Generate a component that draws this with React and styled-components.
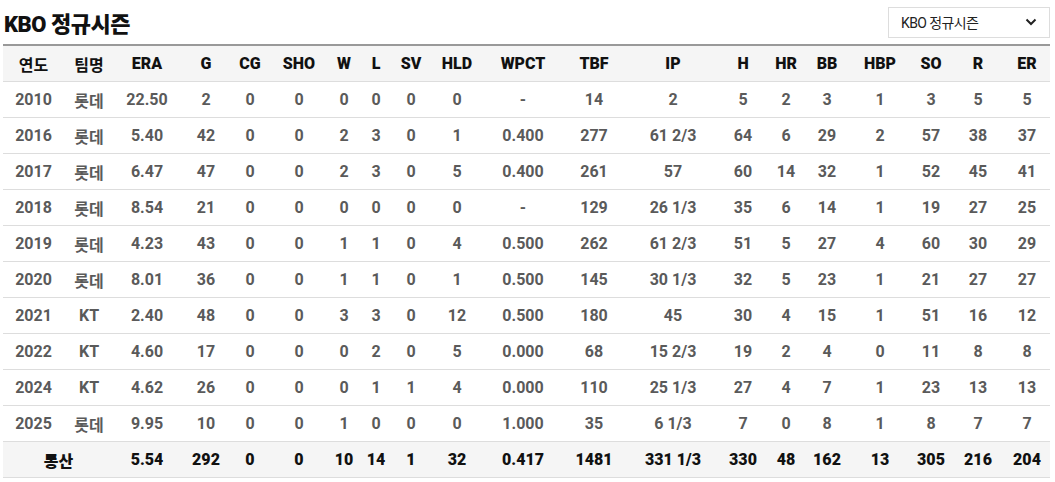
import React from "react";
import styled, { createGlobalStyle } from "styled-components";

const Global = createGlobalStyle`
  html, body { margin: 0; padding: 0; background: #fff; }
  body { font-family: Roboto, "Noto Sans CJK KR", sans-serif; }
`;

const Wrap = styled.div`
  width: 1055px;
  padding: 6px 5px 0 3px;
  box-sizing: border-box;
`;

const TopBar = styled.div`
  display: flex;
  align-items: center;
  justify-content: space-between;
  height: 32px;
  margin-bottom: 6px;
`;

const Title = styled.h2`
  margin: 0;
  padding-left: 1px;
  font-family: Roboto, "Noto Sans CJK KR", sans-serif;
  font-size: 22px;
  font-weight: 900;
  letter-spacing: -0.5px;
  color: #111;
`;

const Select = styled.div`
  width: 162px;
  height: 31px;
  box-sizing: border-box;
  border: 1px solid #ddd;
  display: flex;
  align-items: center;
  justify-content: space-between;
  padding: 0 12px 0 12px;
  font-family: Roboto, "Noto Sans CJK KR", sans-serif;
  font-size: 14px;
  color: #222;
  letter-spacing: -0.6px;
`;

const Table = styled.table`
  width: 1047px;
  border-collapse: collapse;
  table-layout: fixed;
  font-family: Roboto, "Noto Sans CJK KR", sans-serif;
  font-size: 16px;
  font-weight: 700;
  text-align: center;
`;

const HeadRow = styled.tr`
  background: #f5f5f5;
  border-top: 2px solid #999;
  border-bottom: 1px solid #ddd;
`;

const Th = styled.th`
  height: 35px;
  padding: 0;
  color: #111;
  font-family: ${(p) => (p.$ko ? '"Noto Sans CJK KR", sans-serif' : 'Roboto, "Noto Sans CJK KR", sans-serif')};
  font-weight: ${(p) => (p.$ko ? 700 : 900)};
  font-size: 16px;
`;

const Row = styled.tr`
  border-bottom: 1px solid #ddd;
  background: ${(p) => (p.$total ? "#f5f5f5" : "#fff")};
`;

const Td = styled.td`
  height: 35px;
  padding: 0;
  color: ${(p) => (p.$total ? "#111" : "#5a5a5a")};
  font-weight: ${(p) => (p.$total ? 900 : 700)};
  white-space: nowrap;
`;

const cols = [61, 50, 66, 52, 36, 62, 28, 36, 34, 58, 74, 68, 90, 50, 36, 46, 60, 42, 52, 46];
const heads = ["연도", "팀명", "ERA", "G", "CG", "SHO", "W", "L", "SV", "HLD", "WPCT", "TBF", "IP", "H", "HR", "BB", "HBP", "SO", "R", "ER"];

const rows = [
  ["2010", "롯데", "22.50", "2", "0", "0", "0", "0", "0", "0", "-", "14", "2", "5", "2", "3", "1", "3", "5", "5"],
  ["2016", "롯데", "5.40", "42", "0", "0", "2", "3", "0", "1", "0.400", "277", "61 2/3", "64", "6", "29", "2", "57", "38", "37"],
  ["2017", "롯데", "6.47", "47", "0", "0", "2", "3", "0", "5", "0.400", "261", "57", "60", "14", "32", "1", "52", "45", "41"],
  ["2018", "롯데", "8.54", "21", "0", "0", "0", "0", "0", "0", "-", "129", "26 1/3", "35", "6", "14", "1", "19", "27", "25"],
  ["2019", "롯데", "4.23", "43", "0", "0", "1", "1", "0", "4", "0.500", "262", "61 2/3", "51", "5", "27", "4", "60", "30", "29"],
  ["2020", "롯데", "8.01", "36", "0", "0", "1", "1", "0", "1", "0.500", "145", "30 1/3", "32", "5", "23", "1", "21", "27", "27"],
  ["2021", "KT", "2.40", "48", "0", "0", "3", "3", "0", "12", "0.500", "180", "45", "30", "4", "15", "1", "51", "16", "12"],
  ["2022", "KT", "4.60", "17", "0", "0", "0", "2", "0", "5", "0.000", "68", "15 2/3", "19", "2", "4", "0", "11", "8", "8"],
  ["2024", "KT", "4.62", "26", "0", "0", "0", "1", "1", "4", "0.000", "110", "25 1/3", "27", "4", "7", "1", "23", "13", "13"],
  ["2025", "롯데", "9.95", "10", "0", "0", "1", "0", "0", "0", "1.000", "35", "6 1/3", "7", "0", "8", "1", "8", "7", "7"],
];

const total = ["5.54", "292", "0", "0", "10", "14", "1", "32", "0.417", "1481", "331 1/3", "330", "48", "162", "13", "305", "216", "204"];

const Chevron = () => (
  <svg width="12" height="8" viewBox="0 0 12 8">
    <path d="M1.5 1.5 L6 6 L10.5 1.5" fill="none" stroke="#222" strokeWidth="2" />
  </svg>
);

export default function App() {
  return (
    <Wrap>
      <Global />
      <TopBar>
        <Title>KBO 정규시즌</Title>
        <Select>
          <span>KBO 정규시즌</span>
          <Chevron />
        </Select>
      </TopBar>
      <Table>
        <colgroup>
          {cols.map((w, i) => (
            <col key={i} style={{ width: w }} />
          ))}
        </colgroup>
        <thead>
          <HeadRow>
            {heads.map((h, i) => (
              <Th key={h} $ko={i < 2}>{h}</Th>
            ))}
          </HeadRow>
        </thead>
        <tbody>
          {rows.map((r) => (
            <Row key={r[0]}>
              {r.map((c, i) => (
                <Td key={i}>{c}</Td>
              ))}
            </Row>
          ))}
          <Row $total>
            <Td $total colSpan={2}>통산</Td>
            {total.map((c, i) => (
              <Td $total key={i}>{c}</Td>
            ))}
          </Row>
        </tbody>
      </Table>
    </Wrap>
  );
}
